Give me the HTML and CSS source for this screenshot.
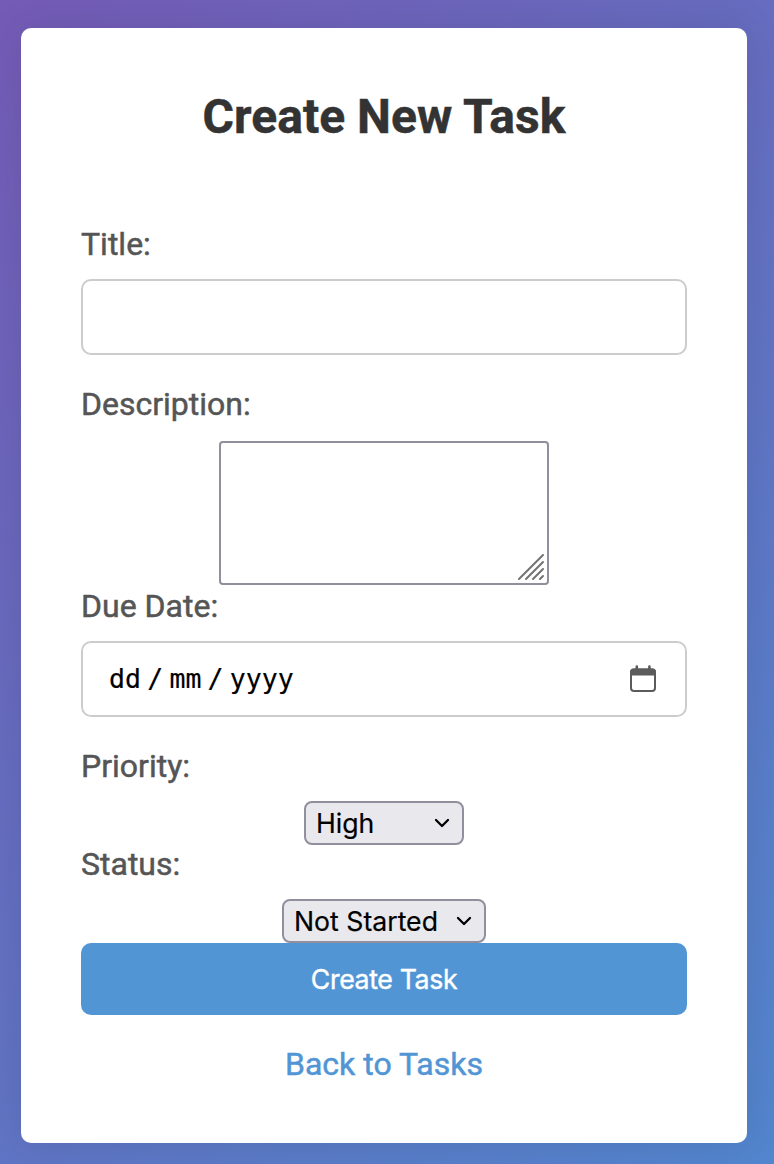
FILE: index.html
```html
<!DOCTYPE html>
<html lang="en">
<head>
<meta charset="utf-8">
<title>Create New Task</title>
<link rel="stylesheet" href="styles.css">
</head>
<body>
<main class="card">
  <h1 class="title">Create New Task</h1>
  <form class="form">
    <label class="label" for="title">Title:</label>
    <input class="field" id="title" type="text">
    <label class="label" for="description">Description:</label>
    <div class="area">
      <textarea class="textarea" id="description"></textarea>
      <svg class="grip" width="28" height="28" viewBox="0 0 28 28"><path d="M2 26 26 2M9 26 26 9M16 26 26 16M23 26 26 23"/></svg>
    </div>
    <span class="label">Due Date:</span>
    <div class="field date">
      <span class="date-text"><span>dd</span><span class="slash">/</span><span>mm</span><span class="slash">/</span><span>yyyy</span></span>
      <svg class="calendar" width="28" height="28" viewBox="0 0 28 28"><path class="calendar-frame" d="M5 4.500h18a3 3 0 0 1 3 3v15.500a3 3 0 0 1-3 3H5a3 3 0 0 1-3-3v-15.500a3 3 0 0 1 3-3z"/><path class="calendar-top" d="M1 10.500V7a3.500 3.500 0 0 1 3.500-3.500H6.500V1.500a1.300 1.300 0 0 1 2.600 0V3.500h10V1.500a1.300 1.300 0 0 1 2.600 0V3.500h1.800A3.500 3.500 0 0 1 27 7V10.500z"/></svg>
    </div>
    <span class="label">Priority:</span>
    <button class="select priority" type="button">High<svg class="chevron" width="16" height="10" viewBox="0 0 16 10"><path d="m2 2 6 6 6-6"/></svg></button>
    <span class="label">Status:</span>
    <button class="select status" type="button">Not Started<svg class="chevron" width="16" height="10" viewBox="0 0 16 10"><path d="m2 2 6 6 6-6"/></svg></button>
    <button class="submit" type="button">Create Task</button>
  </form>
  <a class="back" href="#">Back to Tasks</a>
</main>
</body>
</html>
```
FILE: styles.css
```css
* { box-sizing: border-box; }
body {
  margin: 0;
  height: 1164px;
  padding: 28px 27px 21px 21px;
  overflow: hidden;
  background: linear-gradient(135deg, #745bb6, #5286ce);
  font-family: Roboto, sans-serif;
}
.card {
  height: 1115px;
  padding: 61px 60px 0;
  display: flex;
  flex-direction: column;
  align-items: center;
  background: #fff;
  border-radius: 10px;
  box-shadow: 0 0 40px rgba(0, 0, 0, 0.1);
}
.title {
  margin: 0 0 79px;
  font-size: 48px;
  line-height: 56px;
  font-weight: 700;
  letter-spacing: 0.05px;
  color: #333;
  -webkit-text-stroke: 0.500px #333;
  white-space: nowrap;
}
.form {
  width: 100%;
  display: flex;
  flex-direction: column;
  align-items: center;
}
.label {
  align-self: flex-start;
  margin-bottom: 16px;
  font-size: 32px;
  line-height: 38px;
  height: 38px;
  padding-top: 1px;
  color: #555;
  -webkit-text-stroke: 0.500px #555;
}
.label + .field { margin-top: 1px; }
.field {
  width: 100%;
  height: 76px;
  margin-bottom: 29px;
  padding: 0 28px 0 26px;
  border: 2px solid #ccc;
  border-radius: 10px;
  background: #fff;
}
.area { position: relative; height: 144px; margin: 3px 0 1px; }
.textarea {
  display: block;
  width: 330px;
  height: 144px;
  border: 2px solid #8f8f9d;
  border-radius: 4px;
  resize: none;
}
.grip {
  position: absolute;
  right: 4px;
  bottom: 4px;
  fill: none;
  stroke: #737373;
  stroke-width: 2;
  stroke-linecap: round;
}
.date { display: flex; align-items: center; justify-content: space-between; }
.date-text {
  display: flex;
  padding-bottom: 1px;
  font: 26.5px "DejaVu Sans Mono", monospace;
  color: #000;
  -webkit-text-stroke: 0.200px #000;
}
.slash { width: 28.500px; text-align: center; }
.calendar-frame { fill: none; stroke: #5b5b5b; stroke-width: 2; }
.calendar-top { fill: #5b5b5b; }
.select {
  height: 44px;
  margin-top: 1px;
  padding: 0 12px 0 10px;
  display: flex;
  align-items: center;
  justify-content: space-between;
  border: 2px solid #8f8f9d;
  border-radius: 8px;
  background: #e9e9ed;
  color: #000;
  font: 26.67px Inter, sans-serif;
  -webkit-text-stroke: 0.200px #000;
  white-space: nowrap;
}
.priority { width: 160px; margin-bottom: -1px; }
.status { width: 204px; }
.chevron { fill: none; stroke: #000; stroke-width: 2.300; stroke-linecap: round; stroke-linejoin: round; }
.submit {
  width: 100%;
  height: 72px;
  padding: 0;
  border: 0;
  border-radius: 10px;
  background: #5295d5;
  color: #fff;
  font: 26.67px Inter, sans-serif;
  letter-spacing: -0.350px;
  -webkit-text-stroke: 0.400px #fff;
}
.back {
  margin-top: 30px;
  font-size: 32px;
  line-height: 38px;
  color: #5295d5;
  -webkit-text-stroke: 0.500px #5295d5;
  text-decoration: none;
}
```
